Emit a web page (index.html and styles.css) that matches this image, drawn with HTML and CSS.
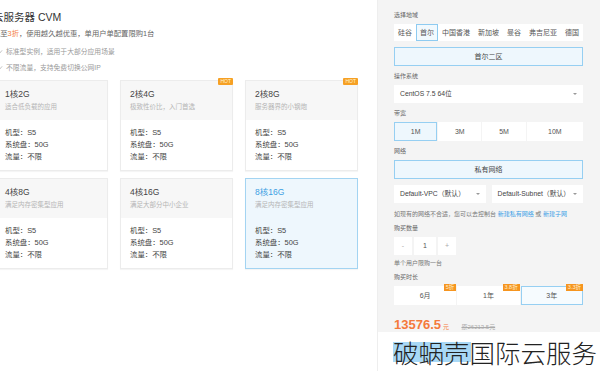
FILE: index.html
```html
<!DOCTYPE html>
<html lang="zh-CN">
<head>
  <meta charset="UTF-8" />
  <meta name="viewport" content="width=device-width, initial-scale=1.0"/>
  <title>云服务器 CVM</title>
  <link rel="stylesheet" href="styles.css">
</head>
<body>
  <div class="page">
    <!-- left: product intro and configs -->
    <div class="main">
      <div class="main-inner">
        <h1 class="page-title">云服务器 CVM</h1>
        <p class="intro">低至<em>3折</em>，使用越久越优惠，单用户单配置限购1台</p>
        <ul class="features">
          <li><svg viewBox="0 0 8 8" width="7" height="7"><path d="M1 4.2l2 2L7 1.5" fill="none" stroke="#bbb" stroke-width="1"/></svg>标准型实例，适用于大部分应用场景</li>
          <li><svg viewBox="0 0 8 8" width="7" height="7"><path d="M1 4.2l2 2L7 1.5" fill="none" stroke="#bbb" stroke-width="1"/></svg>不限流量，支持免费切换公网IP</li>
        </ul>

        <div class="cards">
          <div class="card">
            <div class="card-head">
              <div class="card-title">1核2G</div>
              <div class="card-sub">适合低负载的应用</div>
            </div>
            <div class="card-body">
              <div>机型：S5</div>
              <div>系统盘：50G</div>
              <div>流量：不限</div>
            </div>
          </div>
          <div class="card">
            <span class="hot">HOT</span>
            <div class="card-head">
              <div class="card-title">2核4G</div>
              <div class="card-sub">极致性价比，入门首选</div>
            </div>
            <div class="card-body">
              <div>机型：S5</div>
              <div>系统盘：50G</div>
              <div>流量：不限</div>
            </div>
          </div>
          <div class="card">
            <span class="hot">HOT</span>
            <div class="card-head">
              <div class="card-title">2核8G</div>
              <div class="card-sub">服务器界的小钢炮</div>
            </div>
            <div class="card-body">
              <div>机型：S5</div>
              <div>系统盘：50G</div>
              <div>流量：不限</div>
            </div>
          </div>
          <div class="card">
            <div class="card-head">
              <div class="card-title">4核8G</div>
              <div class="card-sub">满足内存密集型应用</div>
            </div>
            <div class="card-body">
              <div>机型：S5</div>
              <div>系统盘：50G</div>
              <div>流量：不限</div>
            </div>
          </div>
          <div class="card">
            <div class="card-head">
              <div class="card-title">4核16G</div>
              <div class="card-sub">满足大部分中小企业</div>
            </div>
            <div class="card-body">
              <div>机型：S5</div>
              <div>系统盘：50G</div>
              <div>流量：不限</div>
            </div>
          </div>
          <div class="card active">
            <div class="card-head">
              <div class="card-title">8核16G</div>
              <div class="card-sub">满足内存密集型应用</div>
            </div>
            <div class="card-body">
              <div>机型：S5</div>
              <div>系统盘：50G</div>
              <div>流量：不限</div>
            </div>
          </div>
        </div>
      </div>
    </div>

    <!-- right: purchase panel -->
    <div class="side">
      <div class="field first">
        <label>选择地域</label>
        <div class="tabs">
          <span class="tab">硅谷</span>
          <span class="tab active">首尔</span>
          <span class="tab">中国香港</span>
          <span class="tab">新加坡</span>
          <span class="tab">曼谷</span>
          <span class="tab">弗吉尼亚</span>
          <span class="tab">德国</span>
        </div>
        <div class="btn-block active zone">首尔二区</div>
      </div>

      <div class="field">
        <label>操作系统</label>
        <div class="select">CentOS 7.5 64位<span class="arrow"></span></div>
      </div>

      <div class="field">
        <label>带宽</label>
        <div class="opts bw">
          <span class="opt active">1M</span>
          <span class="opt">3M</span>
          <span class="opt">5M</span>
          <span class="opt wide">10M</span>
        </div>
      </div>

      <div class="field">
        <label>网络</label>
        <div class="btn-block active">私有网络</div>
        <div class="select-row">
          <div class="select">Default-VPC（默认）<span class="arrow"></span></div>
          <div class="select">Default-Subnet（默认）<span class="arrow"></span></div>
        </div>
        <p class="note net-note">如现有的网络不合适，您可以去控制台 <a href="#">新建私有网络</a> 或 <a href="#">新建子网</a></p>
      </div>

      <div class="field">
        <label>购买数量</label>
        <div class="stepper">
          <span class="step">-</span>
          <span class="step num">1</span>
          <span class="step">+</span>
        </div>
        <p class="note qty-note">单个用户限购一台</p>
      </div>

      <div class="field">
        <label>购买时长</label>
        <div class="opts dur">
          <span class="opt">6月<i class="off">5折</i></span>
          <span class="opt">1年<i class="off">3.8折</i></span>
          <span class="opt active">3年<i class="off">3.3折</i></span>
        </div>
      </div>

      <div class="price">
        <strong>13576.5</strong><span class="unit">元</span>
        <span class="origin">原26213.5元</span>
      </div>
    </div>
  </div>

  <div class="watermark"><span class="mark-bg"></span><span class="mark-text">破蜗壳国际云服务</span></div>
</body>
</html>
```

FILE: styles.css
```css
/* Reset & Base styles */
* {
  box-sizing: border-box;
  margin: 0;
  padding: 0;
}

body {
  font-family: 'Liberation Sans', 'Noto Sans CJK SC', sans-serif;
  background: #fff;
  color: #333;
  width: 600px;
  height: 371px;
  overflow: hidden;
}

.page {
  display: flex;
  height: 371px;
}

/* left column */
.main {
  width: 377px;
  flex-shrink: 0;
  overflow: hidden;
}

.main-inner {
  margin-left: -7px;
}

.page-title {
  font-size: 10.5px;
  font-weight: normal;
  line-height: 14px;
  padding-top: 10px;
  color: #333;
}

.intro {
  margin-top: 5px;
  font-size: 7.3px;
  line-height: 10px;
  color: #666;
}

.intro em {
  font-style: normal;
  color: #f47a3c;
}

.features {
  list-style: none;
  margin-top: 8px;
}

.features li {
  display: flex;
  align-items: center;
  gap: 3px;
  margin-left: 3px;
  font-size: 6.8px;
  line-height: 10px;
  color: #999;
}

.features li + li {
  margin-top: 6px;
}

.cards {
  display: grid;
  grid-template-columns: repeat(3, 113px);
  grid-auto-rows: 91px;
  gap: 7px 12px;
  margin-top: 7px;
  margin-left: 2px;
}

.card {
  position: relative;
  border: 1px solid #ececec;
  background: #fff;
  box-shadow: 0 1px 1px rgba(0,0,0,0.04);
}

.card-head {
  height: 39px;
  padding: 8px 0 0 9px;
  background: #f7f7f7;
}

.card-title {
  font-size: 8.5px;
  line-height: 11px;
  color: #444;
}

.card-sub {
  margin-top: 2px;
  font-size: 6.5px;
  line-height: 10px;
  color: #b5b5b5;
}

.card-body {
  padding: 7px 0 0 9px;
  font-size: 7.4px;
  line-height: 12px;
  color: #444;
}

.card.active {
  background: #eef7fd;
  border-color: #a3d4f2;
}

.card.active .card-head {
  background: transparent;
}

.card.active .card-title {
  color: #3c9fe3;
}

.hot {
  position: absolute;
  top: -3px;
  right: -1px;
  padding: 0 2px;
  height: 7px;
  line-height: 7px;
  font-size: 5px;
  font-style: normal;
  color: #fff3d8;
  background: #f6a024;
  border-radius: 1px;
}

/* right panel */
.side {
  flex: 1;
  background: #f4f4f4;
  padding: 0 17px 0 16px;
  border-left: 1px solid #eee;
}

.field {
  margin-top: 6px;
}

.field.first {
  margin-top: 11px;
}

.field label {
  display: block;
  height: 8px;
  line-height: 8px;
  margin-bottom: 5px;
  font-size: 6px;
  color: #666;
}

.tabs {
  display: flex;
  justify-content: space-between;
  height: 17px;
  background: #fff;
}

.tab {
  padding: 0 3px;
  font-size: 7px;
  line-height: 15px;
  color: #555;
  border: 1px solid transparent;
}

.tab.active {
  border-color: #8ecbf1;
  background: #f1f9fe;
}

.btn-block {
  height: 19px;
  line-height: 17px;
  text-align: center;
  font-size: 7px;
  color: #444;
  background: #fff;
  border: 1px solid #ddd;
}

.btn-block.active {
  background: #eef7fd;
  border-color: #96cff2;
}

.zone {
  margin-top: 6px;
}

.select {
  position: relative;
  height: 18px;
  line-height: 18px;
  padding-left: 6px;
  font-size: 6.8px;
  color: #444;
  background: #fff;
}

.arrow {
  position: absolute;
  right: 6px;
  top: 8px;
  border-left: 2px solid transparent;
  border-right: 2px solid transparent;
  border-top: 2px solid #999;
}

.select-row {
  display: flex;
  gap: 6px;
  margin-top: 6px;
}

.select-row .select {
  flex: 1;
}

.opts {
  display: flex;
  gap: 1px;
}

.opt {
  position: relative;
  height: 19px;
  line-height: 17px;
  text-align: center;
  font-size: 7px;
  color: #555;
  background: #fff;
  border: 1px solid #fff;
}

.opt.active {
  background: #eef7fd;
  border-color: #96cff2;
}

.bw .opt {
  flex: 44;
}

.bw .opt.wide {
  flex: 58;
}

.dur .opt {
  flex: 1;
}

.dur .opt.active {
  background: #f6fbfe;
}

.off {
  position: absolute;
  top: -3px;
  right: -1px;
  padding: 0 2px;
  height: 7px;
  line-height: 7px;
  font-size: 5.5px;
  font-style: normal;
  color: #fff0d0;
  background: #f6951f;
}

.note {
  font-size: 6px;
  line-height: 8px;
  color: #777;
}

.note a {
  color: #3b9fe6;
  text-decoration: none;
}

.net-note {
  margin-top: 7px;
}

.qty-note {
  margin-top: 4px;
}

.stepper {
  display: flex;
  gap: 2px;
}

.step {
  width: 18px;
  height: 18px;
  line-height: 18px;
  text-align: center;
  font-size: 7px;
  color: #aaa;
  background: #fff;
}

.step.num {
  width: 22px;
  color: #555;
}

.price {
  margin-top: 12px;
  color: #f47a3c;
  line-height: 14px;
}

.price strong {
  font-size: 13px;
}

.price .unit {
  font-size: 6px;
  margin-left: 2px;
}

.price .origin {
  margin-left: 8px;
  font-size: 6px;
  color: #aaa;
  text-decoration: line-through;
}

/* watermark band over the panel bottom */
.watermark {
  position: absolute;
  left: 378px;
  top: 332px;
  width: 222px;
  height: 39px;
  background: #fff;
}

.mark-bg {
  position: absolute;
  left: 15px;
  top: 10px;
  width: 78px;
  height: 20px;
  background: #a8d8f6;
}

.mark-text {
  position: absolute;
  left: 15px;
  top: 3px;
  font-family: 'Noto Sans CJK SC', sans-serif;
  font-weight: 300;
  font-size: 25.5px;
  line-height: 34px;
  color: #222;
  white-space: nowrap;
}
```
